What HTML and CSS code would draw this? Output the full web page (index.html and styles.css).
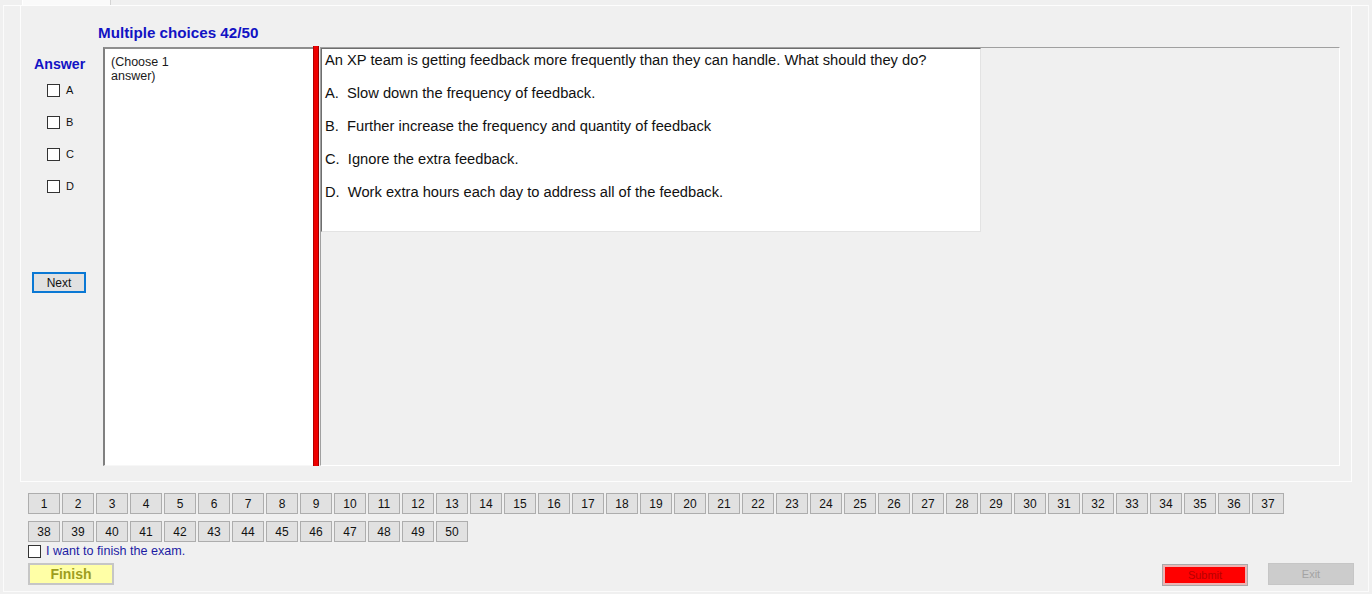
FILE: index.html
```html
<!DOCTYPE html>
<html>
<head>
<meta charset="utf-8">
<title>Exam</title>
<link rel="stylesheet" href="styles.css">
</head>
<body>
<div class="window">
  <div class="tabstrip"><div class="tab"></div></div>
  <div class="tabpage">
    <div class="panel">
      <div class="title">Multiple choices 42/50</div>
      <div class="content">
        <div class="answer-col">
          <div class="answer-label">Answer</div>
          <div class="options">
            <label class="opt"><span class="box"></span><span class="letter">A</span></label>
            <label class="opt"><span class="box"></span><span class="letter">B</span></label>
            <label class="opt"><span class="box"></span><span class="letter">C</span></label>
            <label class="opt"><span class="box"></span><span class="letter">D</span></label>
          </div>
          <button class="next">Next</button>
        </div>
        <div class="choose">(Choose 1<br>answer)</div>
        <div class="redbar"></div>
        <div class="qarea">
          <div class="qtext">
            <p>An XP team is getting feedback more frequently than they can handle. What should they do?</p>
            <p>A.&nbsp; Slow down the frequency of feedback.</p>
            <p>B.&nbsp; Further increase the frequency and quantity of feedback</p>
            <p>C.&nbsp; Ignore the extra feedback.</p>
            <p>D.&nbsp; Work extra hours each day to address all of the feedback.</p>
          </div>
        </div>
      </div>
    </div>
    <div class="bottom">
      <div class="nav">
        <button class="num">1</button><button class="num">2</button><button class="num">3</button><button class="num">4</button><button class="num">5</button><button class="num">6</button><button class="num">7</button><button class="num">8</button><button class="num">9</button><button class="num">10</button>
        <button class="num">11</button><button class="num">12</button><button class="num">13</button><button class="num">14</button><button class="num">15</button><button class="num">16</button><button class="num">17</button><button class="num">18</button><button class="num">19</button><button class="num">20</button>
        <button class="num">21</button><button class="num">22</button><button class="num">23</button><button class="num">24</button><button class="num">25</button><button class="num">26</button><button class="num">27</button><button class="num">28</button><button class="num">29</button><button class="num">30</button>
        <button class="num">31</button><button class="num">32</button><button class="num">33</button><button class="num">34</button><button class="num">35</button><button class="num">36</button><button class="num">37</button><button class="num">38</button><button class="num">39</button><button class="num">40</button>
        <button class="num">41</button><button class="num">42</button><button class="num">43</button><button class="num">44</button><button class="num">45</button><button class="num">46</button><button class="num">47</button><button class="num">48</button><button class="num">49</button><button class="num">50</button>
      </div>
      <label class="finish-check"><span class="box"></span><span>I want to finish the exam.</span></label>
      <div class="actions">
        <button class="finish">Finish</button>
        <div class="right">
          <button class="submit">Submit</button>
          <button class="exit">Exit</button>
        </div>
      </div>
    </div>
  </div>
</div>
</body>
</html>
```
FILE: styles.css
```css
* { box-sizing: border-box; }

html, body {
  margin: 0;
  padding: 0;
  background: #f0f0f0;
  width: 1372px;
  height: 594px;
  overflow: hidden;
  font-family: "Liberation Sans", Arial, sans-serif;
  color: #000;
}

.window {
  padding: 0 3px 0 3px;
}

.tabstrip {
  height: 5px;
  padding-left: 19px;
}

.tab {
  width: 89px;
  height: 5px;
  background: #fafafa;
  border-left: 1px solid #ffffff;
  border-right: 1px solid #d4d4d4;
}

.tabpage {
  height: 587px;
  border: 1px solid #fbfbfb;
  border-top: 1px solid #fdfdfd;
  display: flex;
  flex-direction: column;
}

.panel {
  margin-left: 16px;
  width: 1332px;
  border-left: 1px solid #fdfdfd;
  border-right: 1px solid #fdfdfd;
  border-bottom: 1px solid #fdfdfd;
  padding-top: 18px;
  padding-bottom: 15px;
}

.title {
  padding-left: 77px;
  font-size: 15.2px;
  line-height: 17px;
  font-weight: bold;
  color: #1212c4;
}

.content {
  margin-top: 5px;
  height: 420px;
  display: flex;
  padding-right: 11px;
}

.answer-col {
  width: 82px;
  flex: none;
  padding-left: 13px;
  padding-top: 10px;
}

.answer-label {
  font-size: 14.2px;
  line-height: 16px;
  font-weight: bold;
  color: #1212c4;
}

.options {
  margin-top: 12px;
}

.opt {
  display: flex;
  align-items: flex-start;
  height: 32px;
}

.box {
  display: block;
  width: 13px;
  height: 13px;
  border: 1px solid #333;
  background: #fff;
  flex: none;
}

.opt .box {
  margin-left: 13px;
}

.letter {
  margin-left: 6px;
  font-size: 11px;
  line-height: 12px;
  color: #111;
}

.next {
  display: block;
  margin-top: 60px;
  margin-left: -2px;
  width: 54px;
  height: 21px;
  border: 2px solid #0a78d4;
  background: #e1e1e1;
  font-family: "Liberation Sans", Arial, sans-serif;
  font-size: 12px;
  padding: 0;
  color: #111;
}

.choose {
  width: 210px;
  flex: none;
  margin-top: 1px;
  background: #fff;
  border-top: 2px solid #8e8e8e;
  border-left: 2px solid #808080;
  border-bottom: 1px solid #f7f7f7;
  padding: 6px 0 0 6px;
  font-size: 12.5px;
  line-height: 14px;
  color: #1a1a1a;
}

.redbar {
  width: 6px;
  flex: none;
  background: #ee0000;
  border-left: 1px solid #b40000;
  border-right: 1px solid #a00000;
  margin-right: 1px;
}

.qarea {
  flex: 1;
  margin-top: 1px;
  border-top: 1px solid #a0a0a0;
  border-left: 1px solid #a0a0a0;
  border-right: 1px solid #ffffff;
  border-bottom: 1px solid #ffffff;
}

.qtext {
  width: 660px;
  height: 184px;
  background: #fff;
  border-top: 1px solid #6e6e6e;
  border-left: 1px solid #6e6e6e;
  border-right: 1px solid #e3e3e3;
  border-bottom: 1px solid #e3e3e3;
  padding: 3px 0 0 3px;
  font-size: 14.7px;
  line-height: 17px;
  color: #111;
}

.qtext p {
  margin: 0 0 16px 0;
  white-space: nowrap;
}

.bottom {
  padding: 0 14px 0 24px;
}

.nav {
  margin-top: 11px;
  width: 1270px;
  display: flex;
  flex-wrap: wrap;
  gap: 7px 2px;
}

.num {
  width: 32px;
  height: 21px;
  padding: 0;
  border: 1px solid #adadad;
  background: #e1e1e1;
  font-family: "Liberation Sans", Arial, sans-serif;
  font-size: 12px;
  color: #111;
}

.finish-check {
  margin-top: 3px;
  display: flex;
  align-items: center;
  height: 13px;
}

.finish-check span:last-child {
  margin-left: 5px;
  font-size: 12.6px;
  line-height: 13px;
  color: #1c1ca4;
}

.actions {
  margin-top: 5px;
  display: flex;
  align-items: flex-start;
}

.finish {
  width: 86px;
  height: 22px;
  padding: 0;
  border: 2px solid #c6c6c6;
  background: #ffffa6;
  font-family: "Liberation Sans", Arial, sans-serif;
  font-size: 14px;
  font-weight: bold;
  color: #9e9e1e;
}

.right {
  margin-left: auto;
  display: flex;
  gap: 20px;
}

.submit {
  margin-top: 1px;
  width: 86px;
  height: 22px;
  padding: 0;
  border: 1px solid #a9a9a9;
  box-shadow: inset 0 0 0 2px #ecb4b4;
  background: #ff0000;
  font-family: "Liberation Sans", Arial, sans-serif;
  font-size: 11px;
  color: #b80000;
}

.exit {
  width: 86px;
  height: 22px;
  padding: 0;
  border: 1px solid #c6c6c6;
  background: #cccccc;
  font-family: "Liberation Sans", Arial, sans-serif;
  font-size: 11px;
  color: #a3a3a3;
}
```
